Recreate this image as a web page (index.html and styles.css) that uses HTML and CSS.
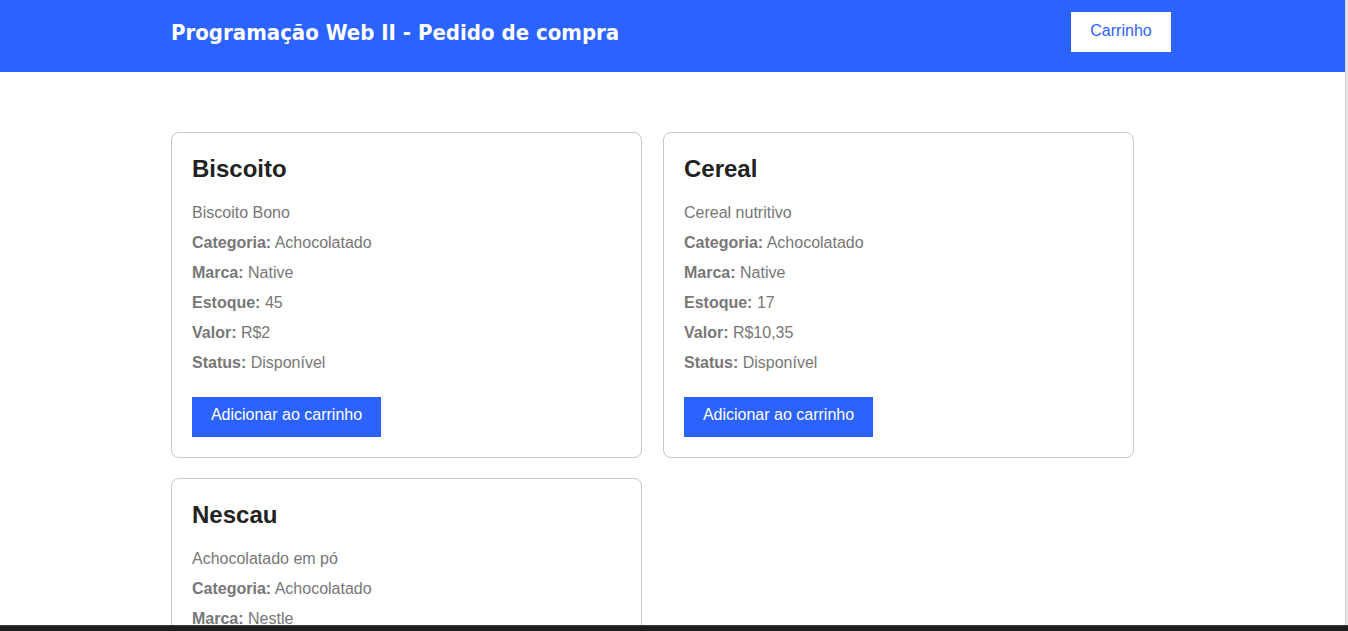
FILE: index.html
```html
<!DOCTYPE html>
<html lang="pt-BR">
<head>
<meta charset="utf-8">
<title>Pedido de compra</title>
<link rel="stylesheet" href="styles.css">
</head>
<body>
<header class="topbar">
  <div class="container topbar-inner">
    <h1 class="brand">Programação Web II - Pedido de compra</h1>
    <button class="cart-btn">Carrinho</button>
  </div>
</header>
<main class="container products">
  <article class="card">
    <h2 class="card-title">Biscoito</h2>
    <p class="line">Biscoito Bono</p>
    <p class="line"><b>Categoria:</b> Achocolatado</p>
    <p class="line"><b>Marca:</b> Native</p>
    <p class="line"><b>Estoque:</b> 45</p>
    <p class="line"><b>Valor:</b> R$2</p>
    <p class="line"><b>Status:</b> Disponível</p>
    <button class="add-btn">Adicionar ao carrinho</button>
  </article>
  <article class="card">
    <h2 class="card-title">Cereal</h2>
    <p class="line">Cereal nutritivo</p>
    <p class="line"><b>Categoria:</b> Achocolatado</p>
    <p class="line"><b>Marca:</b> Native</p>
    <p class="line"><b>Estoque:</b> 17</p>
    <p class="line"><b>Valor:</b> R$10,35</p>
    <p class="line"><b>Status:</b> Disponível</p>
    <button class="add-btn">Adicionar ao carrinho</button>
  </article>
  <article class="card">
    <h2 class="card-title">Nescau</h2>
    <p class="line">Achocolatado em pó</p>
    <p class="line"><b>Categoria:</b> Achocolatado</p>
    <p class="line"><b>Marca:</b> Nestle</p>
    <p class="line"><b>Estoque:</b> 30</p>
    <p class="line"><b>Valor:</b> R$8</p>
    <p class="line"><b>Status:</b> Disponível</p>
    <button class="add-btn">Adicionar ao carrinho</button>
  </article>
</main>
<div class="scroll-track"></div>
<div class="taskbar"></div>
</body>
</html>
```
FILE: styles.css
```css
* { box-sizing: border-box; }
html, body { margin: 0; padding: 0; }
body {
  font-family: "Liberation Sans", Arial, sans-serif;
  background: #fff;
  color: #777;
  padding-right: 3px;
}
.container {
  width: 1000px;
  margin-left: 171px;
}
.topbar {
  background: #2c63ff;
  height: 72px;
}
.topbar-inner {
  display: flex;
  align-items: center;
  justify-content: space-between;
  height: 72px;
  padding-bottom: 8px;
}
.brand {
  margin: 0;
  color: #fff;
  font-family: "DejaVu Sans Condensed", "DejaVu Sans", sans-serif;
  font-stretch: condensed;
  font-size: 22px;
  font-weight: bold;
  padding-top: 1px;
}
.cart-btn {
  width: 100px;
  height: 40px;
  border: none;
  background: #fff;
  color: #2c63ff;
  font-family: inherit;
  font-size: 16px;
  padding: 0 0 2px 0;
}
.products {
  display: grid;
  grid-template-columns: 471px 471px;
  column-gap: 21px;
  row-gap: 20px;
  padding-top: 60px;
}
.card {
  border: 1px solid #c8c8c8;
  border-radius: 8px;
  padding: 20px;
}
.card-title {
  margin: 0 0 13px 0;
  color: #222;
  font-size: 24px;
  font-weight: bold;
  line-height: 32px;
}
.line {
  margin: 0;
  font-size: 16px;
  line-height: 30px;
}
.line b { color: #777; }
.add-btn {
  display: block;
  margin-top: 19px;
  width: 189px;
  height: 40px;
  border: none;
  background: #2c63ff;
  color: #fff;
  font-family: inherit;
  font-size: 16px;
  padding: 0 0 4px 0;
}
.scroll-track {
  position: fixed;
  top: 0;
  right: 0;
  width: 3px;
  height: 100%;
  background: #e6e6e6;
  border-left: 1px solid #d4d4d4;
}
.taskbar {
  position: fixed;
  left: 0;
  right: 0;
  bottom: 0;
  height: 6px;
  background: #1e1e1e;
  border-top: 1px solid #3a3a3a;
}
```
